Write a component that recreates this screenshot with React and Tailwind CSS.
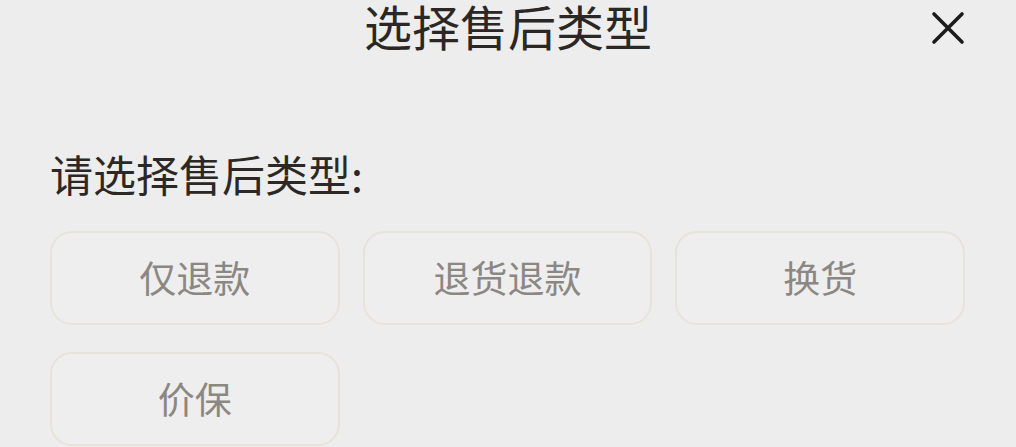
export default function App() {
  const items = ["仅退款", "退货退款", "换货", "价保"];
  return (
    <div
      className="w-[1016px] h-[447px] bg-[#ededed] overflow-hidden relative"
      style={{ fontFamily: '"Noto Sans CJK SC", "Noto Sans", sans-serif' }}
    >
      <div className="relative h-[56px] flex items-start justify-center">
        <div className="text-[48px] leading-[50px] font-normal text-[#2a2724]">选择售后类型</div>
        <svg
          className="absolute left-[930px] top-[10px]"
          width="36"
          height="36"
          viewBox="0 0 36 36"
          fill="none"
          stroke="#1c1c1c"
          strokeWidth="3.6"
          strokeLinecap="round"
        >
          <path d="M4 4L32 32M32 4L4 32" />
        </svg>
      </div>
      <div className="px-[50px] pt-[96px] text-[43px] leading-[42px] text-[#2b2825]">请选择售后类型:</div>
      <div className="grid grid-cols-3 gap-x-[23px] gap-y-[27px] pl-[50px] pr-[51px] mt-[37px]">
        {items.map((t) => (
          <div
            key={t}
            className="h-[94px] rounded-[22px] border-2 border-[#e6e3da] bg-[#eeeeee] flex items-center justify-center text-[37px] text-[#8b8782]"
          >
            {t}
          </div>
        ))}
      </div>
    </div>
  );
}
